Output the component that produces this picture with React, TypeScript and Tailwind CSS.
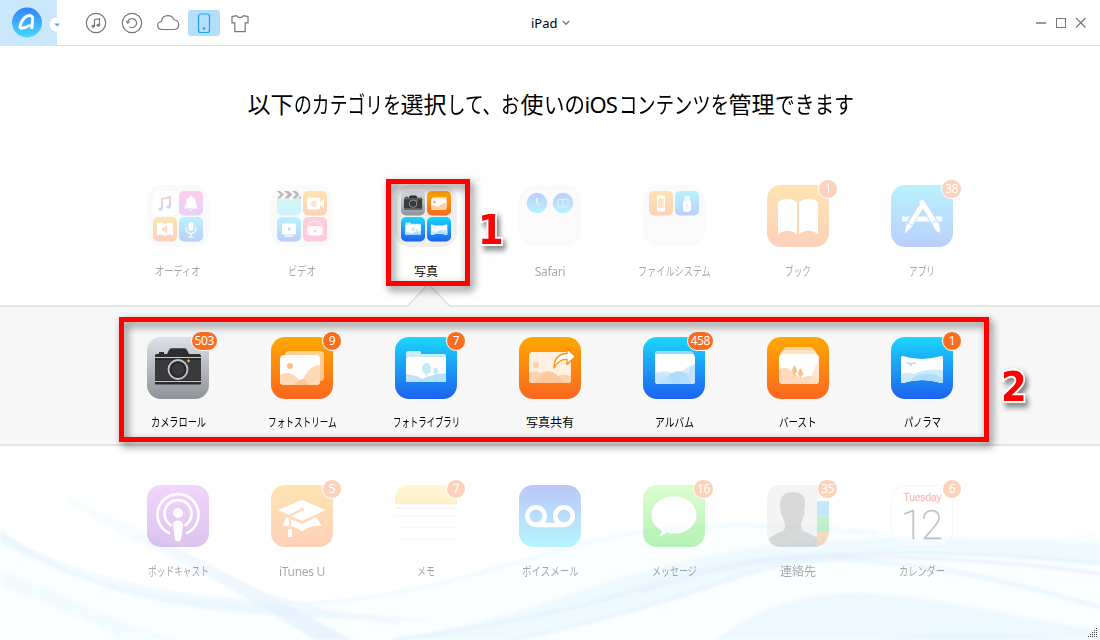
import type { ReactNode } from "react";
import clsx from "clsx";

interface Category {
  label: string;
  width: number;
  icon: ReactNode;
  badge?: string;
  active?: boolean;
}

// Text squeezed horizontally into a fixed width, glyphs keep their height
function Squeezed({ text, width, size }: { text: string; width: number; size: number }) {
  return (
    <span className="inline-block whitespace-nowrap" style={{ width }}>
      <span
        className="inline-block origin-left"
        style={{ transform: `scaleX(${width / (text.length * size)})` }}
      >
        {text}
      </span>
    </span>
  );
}

function Gradients() {
  const list = [
    ["orange", "#ffa800", "#fb661f"],
    ["blue", "#1ad6fd", "#1d62f0"],
    ["silver", "#dde2e9", "#8f9297"],
    ["purple", "#d873f6", "#8a3dc8"],
    ["voice", "#2348ea", "#14dcff"],
    ["green", "#8cfb60", "#18d60e"],
    ["bell", "#ff5eb5", "#b06cff"],
    ["pink", "#ff5c80", "#ff4f9c"],
    ["mint", "#7df0c8", "#56d2ff"],
    ["note", "#ff5468", "#5a6cff"],
    ["yellow", "#ffe37a", "#ffd23c"],
    ["round", "#1d62f0", "#1ad6fd"],
    ["logo", "#3482fb", "#46d8ff"],
  ];
  return (
    <svg className="absolute h-0 w-0">
      <defs>
        {list.map(([id, from, to]) => (
          <linearGradient key={id} id={id} x1="0" y1="0" x2="0" y2="1">
            <stop offset="0" stopColor={from} />
            <stop offset="1" stopColor={to} />
          </linearGradient>
        ))}
      </defs>
    </svg>
  );
}

function Tile({ fill, children }: { fill: string; children?: ReactNode }) {
  return (
    <svg viewBox="0 0 62 62" className="block h-[62px] w-[62px]">
      <rect width="62" height="62" rx="14" fill={fill} />
      {children}
    </svg>
  );
}

function Folder({ children }: { children: ReactNode }) {
  return (
    <svg viewBox="0 0 62 62" className="block h-[62px] w-[62px]">
      <rect width="62" height="62" rx="15" fill="#efefef" />
      {children}
    </svg>
  );
}

function Mini({ x, y, fill, children }: { x: number; y: number; fill: string; children?: ReactNode }) {
  return (
    <g transform={`translate(${x} ${y})`}>
      <rect width="24" height="24.5" rx="5" fill={fill} />
      {children}
    </g>
  );
}

const cameraArt = (
  <>
    <path d="M12 17v-2h5v2zM8 20v-1.500q0-1.500 1.500-1.500H20l2-4q.7-1.700 2.500-1.700h13q1.800 0 2.500 1.700l2 4h10q2 0 2 2v1z" fill="#2e2e30" />
    <rect x="8" y="20" width="46" height="27.500" rx="1" fill="#2b2b2d" />
    <path d="M8 20.500h46M8 44.500h46" stroke="#c9cdd2" strokeWidth="1" />
    <rect x="8" y="23" width="46" height="20" fill="#3a3a3c" />
    <circle cx="31" cy="32.500" r="9.500" fill="#2b2b2d" stroke="#c3c7cc" strokeWidth="1.800" />
    <circle cx="31" cy="32.500" r="6" fill="#39393b" />
    <path d="M41.500 22.300v3M40 23.800h3" stroke="#fdb913" strokeWidth="1.200" />
  </>
);

const streamArt = (
  <>
    <rect x="14" y="14" width="39" height="30" rx="4" fill="#fff" opacity=".55" />
    <rect x="9" y="18" width="40" height="30" rx="4" fill="#fff" />
    <circle cx="19" cy="29" r="3" fill="#fdc08c" />
    <path d="M9 38q8-5 16 2 3 3 6 4 6-13 13-15 3-1 5-1v16q0 4-4 4H13q-4 0-4-4z" fill="#fed9b8" />
    <path d="M23 48q5-6 10-6 4 3 5 6z" fill="#fdc596" />
  </>
);

const libraryArt = (
  <>
    <path d="M11 20v-3.500q0-2.500 2-2.500h11.500q1.500 0 1.500 1.500V17h23q2 0 2 2v2z" fill="#c9ecf5" />
    <rect x="11" y="20" width="40" height="25" rx="1.500" fill="#fff" />
    <ellipse cx="31.500" cy="31.500" rx="4.500" ry="5.500" fill="#c4e9f7" />
    <ellipse cx="40.500" cy="34" rx="2.500" ry="3" fill="#c4e9f7" />
    <path d="M31.500 35v5M40.500 36v4" stroke="#c4e9f7" strokeWidth="1" />
    <path d="M11 37q13 1 20 8H12.500q-1.500 0-1.500-1.500z" fill="#bfe3fb" />
    <path d="M23 45q12-9 28-8.500v7q0 1.500-1.500 1.500z" fill="#a9dcfb" opacity=".85" />
  </>
);

const panoramaArt = (
  <>
    <path d="M10 20.500q0-2 2-1.500 19 6 38 0 2-.5 2 1.500v24q0 2-2 1.500-19-6-38 0-2 .5-2-1.500z" fill="#fff" />
    <path d="M10 37q8-1.800 13 0 12-6 29-4v11.500q0 2-2 1.500-19-6-38 0-2 .5-2-1.500z" fill="#cdeafc" />
    <path d="M20 43q8-8 20-6 7 1 12 5v2.500q0 2-2 1.500-15-5-30-3z" fill="#9ed8fa" opacity=".7" />
    <path d="M15.500 26q3-1 4 2.500 1.500-3 5.500-2.500" fill="none" stroke="#a6d8f7" strokeWidth="1.200" />
  </>
);

const openBook = (
  <path d="M11 17q9-6.500 19 0v32q-9-7-19 0zM32 17q10-6.500 19 0v32q-10-7-19 0z" fill="#fff" />
);

const audioIcon = (
  <Folder>
    <Mini x={6} y={6} fill="#fff">
      <path d="M9 18V8l8-2v10" fill="none" stroke="url(#note)" strokeWidth="2" />
      <ellipse cx="7.500" cy="18" rx="2.300" ry="1.800" fill="#8b67e8" />
      <ellipse cx="15.500" cy="16" rx="2.300" ry="1.800" fill="#4a91f5" />
    </Mini>
    <Mini x={32} y={6} fill="url(#bell)">
      <path d="M12 4.500q1.500 0 1.500 1.800 3.500 1 3.500 6 0 3.500 2 5.200H5q2-1.700 2-5.200 0-5 3.500-6 0-1.800 1.500-1.800zM10 18.500h4q-2 2.500-4 0z" fill="#fff" />
    </Mini>
    <Mini x={6} y={32} fill="url(#orange)">
      <path d="M4 6.500q4-2 7 0l1 1 1-1q3-2 7 0v12q-4-2-7 0l-1 .7-1-.7q-3-2-7 0z" fill="#fff" />
      <path d="M9 11h2l3-3v9l-3-3H9z" fill="#fb8b3a" />
    </Mini>
    <Mini x={32} y={32} fill="url(#blue)">
      <rect x="9.500" y="5" width="5" height="9" rx="2.500" fill="#fff" />
      <path d="M7 10.500q0 6 5 6t5-6M12 16.500v3M9 20h6" fill="none" stroke="#fff" strokeWidth="1.200" />
    </Mini>
  </Folder>
);

const videoIcon = (
  <Folder>
    <Mini x={6} y={6} fill="url(#mint)">
      <path d="M0 0h24v8H0z" fill="#efefef" />
      <path d="M0 0h3l4 3.500L3 7.500H0l3.500-4zM7 0h4.500l4 3.500-4 4H7l4-4zM15 0h4l3.500 3.500-3.500 4h-4l4-4zM22 6l2-1v2.500h-3z" fill="#1d1d1f" />
    </Mini>
    <Mini x={32} y={6} fill="url(#orange)">
      <rect x="4" y="6.500" width="13" height="12" rx="2" fill="#fff" />
      <path d="M17 11l4-3v9l-4-3z" fill="#fff" />
      <path d="M7.500 11q3.500-3 6.500 0-1 5-3 5.500-2.500-1-3.500-5.500z" fill="#fba65e" />
    </Mini>
    <Mini x={6} y={32} fill="url(#blue)">
      <rect x="5" y="6.500" width="14" height="11" rx="1" fill="#fff" />
      <path d="M8 19h8" stroke="#fff" strokeWidth="1.400" />
      <path d="M11 10l3.500 2-3.500 2z" fill="#2c7df3" />
    </Mini>
    <Mini x={32} y={32} fill="url(#pink)">
      <path d="M5 12q0-8 7-8t7 8" fill="none" stroke="#fff" opacity=".6" strokeWidth="1.200" />
      <rect x="4" y="10" width="3" height="8" rx="1" fill="#fff" opacity=".7" />
      <rect x="17" y="10" width="3" height="8" rx="1" fill="#fff" opacity=".7" />
      <rect x="6.500" y="9" width="11" height="9.500" rx="1" fill="#fff" />
      <path d="M11 12l3 2-3 2z" fill="#ff5484" />
    </Mini>
  </Folder>
);

const photoIcon = (
  <Folder>
    <Mini x={6} y={6} fill="url(#silver)">
      <g transform="scale(.39)">{cameraArt}</g>
    </Mini>
    <Mini x={32} y={6} fill="url(#orange)">
      <rect x="5" y="6" width="15" height="12" rx="1.500" fill="#ffd2a2" />
      <rect x="4" y="7.500" width="15" height="11.500" rx="1.500" fill="#fff" />
      <circle cx="7.500" cy="11" r="1.200" fill="#fb9b48" />
      <path d="M4 15q4-2 7 1 4-4 8-4v5.500q0 1.500-1.500 1.500h-12Q4 19 4 17.500z" fill="#fed0a5" />
    </Mini>
    <Mini x={6} y={32} fill="url(#blue)">
      <g transform="scale(.39)">{libraryArt}</g>
    </Mini>
    <Mini x={32} y={32} fill="url(#blue)">
      <g transform="scale(.39)">{panoramaArt}</g>
    </Mini>
  </Folder>
);

const safariIcon = (
  <Folder>
    <rect x="6" y="6" width="24" height="24" rx="6" fill="#f7f7f7" />
    <circle cx="18" cy="18" r="10.300" fill="url(#round)" />
    <path d="M18 13v5.500l3.500 1.200" fill="none" stroke="#fff" strokeWidth="1.200" />
    <path d="M18 18.500l3.500 1.200" stroke="#f66" strokeWidth="1.200" />
    <rect x="32" y="6" width="24" height="24" rx="6" fill="#f7f7f7" />
    <circle cx="44" cy="18" r="10.300" fill="url(#round)" />
    <path d="M39 14.500h10v7.500H39zM44 14.500V22" fill="none" stroke="#a8ccfb" strokeWidth="1" />
    <circle cx="47" cy="14.500" r="1.200" fill="#f87a9a" />
  </Folder>
);

const fileIcon = (
  <Folder>
    <Mini x={6} y={6} fill="url(#orange)">
      <rect x="8" y="4.500" width="8" height="16" rx="1.500" fill="#fff" />
      <rect x="9.300" y="7.500" width="5.400" height="9.500" fill="#fda444" />
    </Mini>
    <Mini x={32} y={6} fill="url(#blue)">
      <rect x="9.500" y="5" width="5.500" height="5" fill="#fff" opacity=".8" />
      <path d="M8 10h8v8q0 3-4 3t-4-3z" fill="#fff" />
      <path d="M12 11.500v6M10.500 14l3 2-1.500 1.500M13.500 13.500l-3 2" fill="none" stroke="#3b93f6" strokeWidth=".6" opacity=".45" />
    </Mini>
  </Folder>
);

const appIcon = (
  <Tile fill="url(#blue)">
    <g stroke="#fff" fill="#fff">
      <path d="M11 34h40" strokeWidth="5" />
      <path d="M31 18L17 42" stroke="#3aa2f7" strokeWidth="7.500" />
      <path d="M32 17L46 42" stroke="#3aa2f7" strokeWidth="7.500" />
      <path d="M32.500 18L17.500 42" strokeWidth="4.600" />
      <path d="M15.500 40.500l4 2.300-5.500 5.200z" strokeWidth=".5" />
      <path d="M30 15.500L46 41.500" strokeWidth="5" />
      <path d="M43 41.500l4.500-2.500q2 4 1 8.500-4-1-5.500-6z" strokeWidth=".5" />
      <path d="M17 38l4 2.300M41 38l5-2.800" stroke="#2f88f5" strokeWidth="1" />
    </g>
  </Tile>
);

const sharedIcon = (
  <Tile fill="url(#orange)">
    <rect x="10" y="15" width="42" height="31" rx="3.500" fill="#fff0e2" />
    <circle cx="17" cy="28" r="3.200" fill="#fdd3b0" />
    <path d="M10 36q6-3 12 0 9-5 17 3 6-3 13 0v3.500q0 3.500-3.500 3.500h-35Q10 46 10 42.500z" fill="#fcd3ae" />
    <path d="M16 46q6-11 15-11 8 1 14 11z" fill="#fbc391" opacity=".6" />
    <path d="M35 31q0-14 13-14.500v-5l8.500 8-8.500 8v-5q-8-.5-13 8.500z" fill="#fff" stroke="#fd8d13" strokeWidth="1.300" strokeLinejoin="round" />
  </Tile>
);

const albumIcon = (
  <Tile fill="url(#blue)">
    <path d="M12 17v-1.500q0-1.500 1.500-1.500H48q1.500 0 2 1.500l.5 1.500z" fill="#8fdcfb" />
    <path d="M12 17h38.500l1.500 3v24q0 3-3 3H15q-3 0-3-3z" fill="#fff" />
    <path d="M12 36q12-4 18 1 8-6 16 0 1-9 6-10v17q0 3-3 3H15q-3 0-3-3z" fill="#d3ecfd" />
    <path d="M18 47q8-13 18-13 8 2 12 13z" fill="#9cd5fb" opacity=".7" />
    <path d="M12 37q11-5 18 10H15q-3 0-3-3z" fill="#bfe4fd" opacity=".7" />
    <path d="M31 47q9-18 21-20v17q0 3-3 3z" fill="#b5dffc" opacity=".55" />
  </Tile>
);

const burstIcon = (
  <Tile fill="url(#orange)">
    <path d="M16 14q0-4 4-4h22q4 0 5 3l2 5H14z" fill="#ffe1b4" opacity=".8" />
    <path d="M13 18q1-5 5-5h27q4 0 5 5z" fill="#ffe2c0" />
    <rect x="12" y="17" width="40" height="30" rx="4" fill="#fff" />
    <path d="M12 32q8-3 14 3 6 7 12 5 6-3 14 1v2q0 4-4 4H16q-4 0-4-4z" fill="#fed9bb" />
    <path d="M52 21L41 47h7q4 0 4-4z" fill="#fee2ca" opacity=".8" />
    <path d="M27.500 28q-5 8 0 9 5-1 0-9zM33.500 31q-5 7 0 8.500 5-1.500 0-8.500z" fill="#fdc08c" />
    <path d="M27.500 34v5M33.500 36v4.500" stroke="#fdc08c" />
  </Tile>
);

const podcastIcon = (
  <Tile fill="url(#purple)">
    <g fill="none" stroke="#fff" strokeWidth="2.600">
      <path d="M23 48.500a20.500 20.500 0 1 1 16 0" />
      <path d="M24.500 40.500a13.500 13.500 0 1 1 13 0" />
    </g>
    <circle cx="31" cy="28" r="5" fill="#fff" />
    <path d="M26 40q0-4.500 5-4.500t5 4.500l-1.700 13.500q-.5 3-3.300 3t-3.300-3z" fill="#fff" />
  </Tile>
);

const itunesIcon = (
  <Tile fill="url(#orange)">
    <path d="M7 25l24-10 23.500 10L31 36z" fill="#fff" />
    <path d="M15 32l16 7 14-7 6 9q-12-1-20 5.500Q23 40 12 41z" fill="#fff" />
    <path d="M31 24.500l-12 6V43" fill="none" stroke="#fb9030" strokeWidth="2.200" />
    <circle cx="31" cy="24.500" r="2" fill="#fb9030" />
    <path d="M17 45q2-2.500 4 0v7h-4z" fill="#fff" />
  </Tile>
);

const memoIcon = (
  <svg viewBox="0 0 62 62" className="block h-[62px] w-[62px]">
    <rect width="62" height="62" rx="14" fill="#fff" opacity=".8" />
    <path d="M0 18.500V14Q0 0 14 0h34q14 0 14 14v4.500z" fill="url(#yellow)" />
    <path d="M0 18.800h62" stroke="#c9b98a" />
    <path d="M1 23h60" stroke="#bbb" strokeWidth="1.500" strokeDasharray="1.200 1.200" />
    <path d="M1 31h60M1 42.500h60M1 54h60" stroke="#ececec" strokeWidth="1.500" />
  </svg>
);

const voicemailIcon = (
  <Tile fill="url(#voice)">
    <g fill="none" stroke="#fff" strokeWidth="4.600">
      <circle cx="17" cy="31" r="8.700" />
      <circle cx="45" cy="31" r="8.700" />
      <path d="M17 40h28" />
    </g>
  </Tile>
);

const messageIcon = (
  <Tile fill="url(#green)">
    <path d="M31 11.500c12.500 0 22.500 8 22.500 18.500s-10 18.500-22.500 18.500q-4 0-7.500-1-3 3.500-7.500 4 3-2.500 2.500-6C12 42 8.500 36.500 8.500 30c0-10.500 10-18.500 22.500-18.500z" fill="#fff" />
  </Tile>
);

const contactIcon = (
  <svg viewBox="0 0 62 62" className="block h-[62px] w-[62px]">
    <path d="M50 0Q62 2 62 14v2H50z" fill="#f1f1f1" />
    <path d="M50 16h12v15.500H50z" fill="#3db5f9" />
    <path d="M50 31.500h12V47H50z" fill="#38cf5c" />
    <path d="M50 47h12q-1 12-12 15z" fill="#fb8823" />
    <path d="M50 0v62H14Q0 62 0 48V14Q0 0 14 0z" fill="#dcdcdc" />
    <path d="M26 7q13 0 12 13 0 3-1 6 2 3-1 6-1 5-2 7-.5 6 4 8 7 2 12 5.500V62H14Q5 62 1.500 54 7 49 14 47q5-2 4-8-1-2-2-7-3-3-2-6-1-3-1-6Q13 7 26 7z" fill="#858585" />
    <g fill="none" stroke="#777" strokeWidth="1" opacity=".6">
      <circle cx="56" cy="23.500" r="1.500" />
      <circle cx="56" cy="39" r="1.500" />
      <circle cx="56" cy="53" r="1.500" />
    </g>
  </svg>
);

const calendarIcon = (
  <svg viewBox="0 0 62 62" className="block h-[62px] w-[62px]">
    <rect x=".5" y=".5" width="61" height="61" rx="14" fill="#fff" stroke="#e4e4e4" />
    <text x="31.500" y="16" textAnchor="middle" textLength="38" fontSize="10" fill="#ff2b2b" stroke="#ff2b2b" strokeWidth=".4" className="font-['Liberation_Sans',sans-serif]">Tuesday</text>
    <text x="31" y="53.500" textAnchor="middle" textLength="42" fontSize="40" fill="#333" className="font-['Roboto',sans-serif] font-thin" stroke="#333" strokeWidth=".6">12</text>
  </svg>
);

const topRow: Category[] = [
  { label: "オーディオ", width: 46, icon: audioIcon },
  { label: "ビデオ", width: 28, icon: videoIcon },
  { label: "写真", width: 24, icon: photoIcon, active: true },
  { label: "Safari", width: 0, icon: safariIcon },
  { label: "ファイルシステム", width: 73, icon: fileIcon },
  { label: "ブック", width: 26, icon: <Tile fill="url(#orange)">{openBook}</Tile>, badge: "1" },
  { label: "アプリ", width: 26, icon: appIcon, badge: "38" },
];

const photoRow: Category[] = [
  { label: "カメラロール", width: 55, icon: <Tile fill="url(#silver)">{cameraArt}</Tile>, badge: "503" },
  { label: "フォトストリーム", width: 69, icon: <Tile fill="url(#orange)">{streamArt}</Tile>, badge: "9" },
  { label: "フォトライブラリ", width: 67, icon: <Tile fill="url(#blue)">{libraryArt}</Tile>, badge: "7" },
  { label: "写真共有", width: 48, icon: sharedIcon },
  { label: "アルバム", width: 39, icon: albumIcon, badge: "458" },
  { label: "バースト", width: 38, icon: burstIcon },
  { label: "パノラマ", width: 37, icon: <Tile fill="url(#blue)">{panoramaArt}</Tile>, badge: "1" },
];

const bottomRow: Category[] = [
  { label: "ポッドキャスト", width: 61, icon: podcastIcon },
  { label: "iTunes U", width: 0, icon: itunesIcon, badge: "5" },
  { label: "メモ", width: 18, icon: memoIcon, badge: "7" },
  { label: "ボイスメール", width: 57, icon: voicemailIcon },
  { label: "メッセージ", width: 45, icon: messageIcon, badge: "16" },
  { label: "連絡先", width: 36, icon: contactIcon, badge: "35" },
  { label: "カレンダー", width: 46, icon: calendarIcon, badge: "6" },
];

const titleParts: [string, number][] = [
  ["以下", 46],
  ["のカテゴリを", 107],
  ["選択", 46],
  ["して、お", 74],
  ["使", 23],
  ["いの", 41],
  ["iOS", 34],
  ["コンテンツを", 110],
  ["管理", 46],
  ["できます", 79],
];

function CategoryItem({ item, dim, spaced }: { item: Category; dim: boolean; spaced: boolean }) {
  return (
    <div className="flex flex-col items-center">
      <div className={clsx("relative", dim && "opacity-30")}>
        {item.icon}
        {item.badge && (
          <span className="absolute -top-[6px] -right-[9px] flex h-5 min-w-5 items-center justify-center rounded-full border border-white bg-[#fb6d1f] px-[3px] text-[12px] leading-none tracking-[-0.4px] text-white">
            {item.badge}
          </span>
        )}
      </div>
      <div
        className={clsx(
          "h-[18px] text-[12px] leading-[18px] text-black",
          spaced ? "mt-4" : "mt-[15px]",
          dim && "opacity-35"
        )}
      >
        {item.width ? (
          <Squeezed text={item.label} width={item.width} size={12} />
        ) : (
          <span className="tracking-[-0.3px]">{item.label}</span>
        )}
      </div>
    </div>
  );
}

function CategoryRow({ items, dim }: { items: Category[]; dim: boolean }) {
  return (
    <div className="mx-auto grid w-[868px] grid-cols-7">
      {items.map((item) => (
        <CategoryItem key={item.label} item={item} dim={dim && !item.active} spaced={dim} />
      ))}
    </div>
  );
}

function Waves() {
  return (
    <svg viewBox="0 0 1100 200" className="absolute bottom-0 left-0 h-[200px] w-[1100px] opacity-80" fill="none">
      <defs>
        <filter id="soft" x="-5%" y="-20%" width="110%" height="140%">
          <feGaussianBlur stdDeviation="1.4" />
        </filter>
        <linearGradient id="fade" x1="0" y1="0" x2="1" y2="1">
          <stop offset="0" stopColor="#e2f5fe" stopOpacity="0" />
          <stop offset=".5" stopColor="#e0f3fe" stopOpacity=".7" />
          <stop offset="1" stopColor="#dceafd" />
        </linearGradient>
      </defs>
      <g filter="url(#soft)">
        <path d="M0 92C70 135 160 165 316 163C421 150 491 127 596 100C667 84 744 80 877 91C950 96 1020 100 1100 92V200H0z" fill="#f6fdff" opacity=".7" />
        <path d="M0 92C70 140 175 160 300 164C421 158 491 127 596 100C667 84 744 80 877 93" stroke="#e6f7fe" strokeWidth="2.500" />
        <path d="M0 90C60 135 130 158 280 165C350 174 400 179 450 180C300 181 190 172 120 152C60 132 30 118 0 102z" fill="#e0f3fd" opacity=".75" />
        <path d="M21 17C60 55 120 82 168 103C210 125 290 165 352 200H315C260 165 200 130 150 108C100 85 50 55 21 17z" fill="url(#fade)" opacity=".75" />
        <path d="M170 105C230 145 290 170 400 183" stroke="#f0f0fd" strokeWidth="2.500" />
        <path d="M393 200C480 184 520 172 561 157C620 136 700 114 772 105C840 97 930 96 1100 103V125C1000 110 900 108 807 121C737 134 690 158 632 172C590 184 550 192 512 200z" fill="#e3f6fe" opacity=".7" />
        <path d="M393 200C470 190 580 170 640 148C720 118 800 112 912 113C980 113 1040 118 1100 123" stroke="#dceefd" strokeWidth="3" opacity=".9" />
        <path d="M640 152C720 125 780 117 850 117C940 117 1020 122 1100 134" stroke="#e0e3fd" strokeWidth="2" />
        <path d="M512 200C600 182 670 160 737 137C780 122 814 119 850 120C950 125 1040 150 1100 167" stroke="#e3f3fe" strokeWidth="3.500" />
        <path d="M0 130C80 160 120 185 180 200H120C85 175 45 165 0 145z" fill="#e8f9fe" opacity=".55" />
        <path d="M716 200C745 176 790 153 856 153C930 154 1000 175 1100 190V200z" fill="#e6f7fe" opacity=".85" />
        <path d="M880 200C935 191 1010 192 1070 200z" fill="#dbf0fd" opacity=".6" />
      </g>
    </svg>
  );
}

function Header() {
  return (
    <header className="relative flex h-[46px] items-start border-b border-[#dedede] bg-white">
      <div className="flex h-[45px] w-[57px] items-center bg-[#cbe8fb]">
        <svg viewBox="0 0 57 45" className="h-[45px] w-[57px] overflow-visible">
          <circle cx="27" cy="22.500" r="15" fill="url(#logo)" />
          <path d="M29 25.800Q24 28.500 21 28.300 19.200 27.800 20.500 24.500 23.800 15.800 29.500 15.500 32.800 15.500 32.600 19.500L31.800 27.800" fill="none" stroke="#fff" strokeWidth="3" strokeLinecap="round" strokeLinejoin="round" />
          <circle cx="57" cy="24.500" r="7.300" fill="#fff" />
          <path d="M54.300 23.500h5.600l-2.800 2.900z" fill="#41afea" />
        </svg>
      </div>
      <div className="ml-[23px] flex h-[45px] items-center gap-1 text-[#777]">
        <svg viewBox="0 0 32 26" className="h-[26px] w-8" fill="none" stroke="currentColor" strokeWidth="1.200">
          <circle cx="16" cy="13" r="9.700" />
          <path d="M14.500 16.200V9.700l5-1v6.500" />
          <ellipse cx="13.200" cy="16.300" rx="1.500" ry="1.200" fill="currentColor" strokeWidth=".5" />
          <ellipse cx="18.200" cy="15.300" rx="1.500" ry="1.200" fill="currentColor" strokeWidth=".5" />
        </svg>
        <svg viewBox="0 0 32 26" className="h-[26px] w-8" fill="none" stroke="currentColor" strokeWidth="1.200">
          <circle cx="16" cy="13" r="9.700" />
          <path d="M11.700 12a4.500 4.500 0 1 1 1.600 4.600" />
          <path d="M10.200 11.200l1.600 2 1.800-1.600" />
        </svg>
        <svg viewBox="0 0 32 26" className="h-[26px] w-8" fill="none" stroke="currentColor" strokeWidth="1.200">
          <path d="M10 19.500q-4.300-.3-4.300-4 0-3.400 3.800-4Q10 5.700 16 5.700q4.500 0 6.200 4.300 4.500 0 4.500 5 0 4-4.200 4.500z" />
        </svg>
        <svg viewBox="0 0 32 26" className="h-[26px] w-8 rounded-[3px] bg-[#b3dffa]" fill="none" stroke="#1e9fee" strokeWidth="1.200">
          <rect x="10.500" y="4" width="11" height="18.500" rx="2" />
          <circle cx="16" cy="18.500" r=".6" fill="#1e9fee" />
        </svg>
        <svg viewBox="0 0 32 26" className="h-[26px] w-8" fill="none" stroke="currentColor" strokeWidth="1.200">
          <path d="M12.300 5.600q3.700 4 7.400 0l4.300 1v6.200h-2.800v8.900h-10.400v-8.900H8V6.600z" />
        </svg>
      </div>
      <div className="absolute top-[14px] left-[531px] flex items-center gap-1 text-[13px] leading-[18px] text-black">
        iPad
        <svg viewBox="0 0 8 6" className="h-1.5 w-2" fill="none" stroke="#777" strokeWidth="1.300">
          <path d="M.8 1L4 4.300 7.200 1" />
        </svg>
      </div>
      <svg viewBox="0 0 54 14" className="mt-[15px] mr-[14px] ml-auto h-[14px] w-[54px]" fill="none" stroke="#777">
        <path d="M4 8h10" strokeWidth="1.500" />
        <rect x="24.500" y="3.500" width="9" height="9" />
        <path d="M44 3l9.500 9.500M53.500 3L44 12.500" strokeWidth="1.200" />
      </svg>
    </header>
  );
}

export default function App() {
  return (
    <div className="relative h-[640px] w-[1100px] overflow-hidden bg-white font-['Noto_Sans','Noto_Sans_CJK_JP',sans-serif]">
      <Gradients />
      <Waves />
      <div className="relative flex flex-col">
        <Header />
        <h1 className="flex h-[139px] justify-center pt-10 pl-px text-[23px] leading-9 font-normal text-black">
          {titleParts.map(([text, width]) =>
            text === "iOS" ? (
              <span key={text} className="inline-block w-[34px] text-[22px] tracking-[-0.8px]">{text}</span>
            ) : (
              <Squeezed key={text} text={text} width={width} size={23} />
            )
          )}
        </h1>
        <section className="h-[120px]">
          <CategoryRow items={topRow} dim />
        </section>
        <section className="relative h-[141px] border-y-2 border-[#e4e4e4] bg-[#f7f7f7] pt-[30px]">
          <svg viewBox="0 0 44 24" className="absolute -top-[23px] left-[407px] h-6 w-11">
            <path d="M0 22.500L19 2.500q2.500-2.500 5 0L43 22.500V24H1z" fill="#f7f7f7" />
            <path d="M0 22.500L19 2.500q2.500-2.500 5 0L43 22.500" fill="none" stroke="#dedede" strokeWidth="1.500" />
          </svg>
          <CategoryRow items={photoRow} dim={false} />
        </section>
        <section className="pt-[39px]">
          <CategoryRow items={bottomRow} dim />
        </section>
      </div>

      {/* Step callouts */}
      <div className="absolute top-[179px] left-[386px] h-[107px] w-[84px] border-[5px] border-[#fe0000] drop-shadow-[3px_4px_4px_rgba(0,0,0,0.55)]" />
      <div className="absolute top-[317px] left-[119px] h-[125px] w-[870px] border-[5px] border-[#fe0000] drop-shadow-[3px_4px_4px_rgba(0,0,0,0.55)]" />
      <span className="absolute top-[210px] left-[477px] scale-x-[.92] font-['DejaVu_Sans',sans-serif] text-[40px] leading-10 font-bold text-[#fe0000] drop-shadow-[3px_4px_3px_rgba(0,0,0,0.5)] [-webkit-text-stroke:4px_white] [paint-order:stroke_fill]">1</span>
      <span className="absolute top-[367px] left-[1000px] scale-x-[.92] font-['DejaVu_Sans',sans-serif] text-[40px] leading-10 font-bold text-[#fe0000] drop-shadow-[3px_4px_3px_rgba(0,0,0,0.5)] [-webkit-text-stroke:4px_white] [paint-order:stroke_fill]">2</span>

      <svg viewBox="0 0 10 10" className="absolute right-[2px] bottom-[2px] h-[10px] w-[10px]" fill="#444">
        <path d="M8 0h1v1H8zM6 2h1v1H6zM8 2h1v1H8zM4 4h1v1H4zM6 4h1v1H6zM8 4h1v1H8zM2 6h1v1H2zM4 6h1v1H4zM6 6h1v1H6zM8 6h1v1H8zM0 8h1v1H0zM2 8h1v1H2zM4 8h1v1H4zM6 8h1v1H6zM8 8h1v1H8z" />
      </svg>
    </div>
  );
}
